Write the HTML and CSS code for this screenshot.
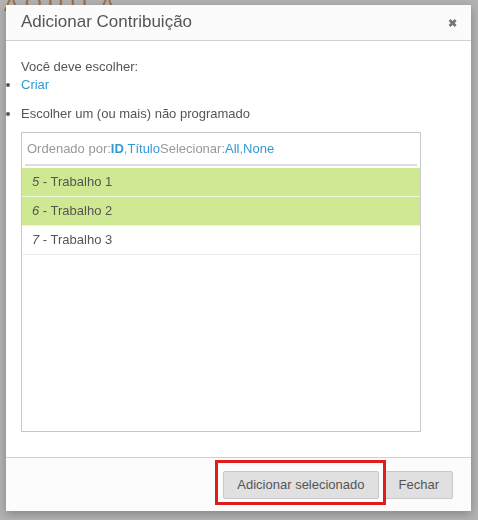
FILE: index.html
```html
<!DOCTYPE html>
<html>
<head>
<meta charset="utf-8">
<link rel="stylesheet" href="styles.css">
</head>
<body>
<div class="page">
  <div class="brand">AQUILA</div>
</div>
<div class="overlay"></div>
<div class="dialog">
  <div class="dlg-head">
    <h3 class="dlg-title">Adicionar Contribuição</h3>
    <span class="dlg-close">&#10006;</span>
  </div>
  <div class="dlg-body">
    <p class="intro">Você deve escolher:</p>
    <ul class="choices">
      <li><a class="link">Criar</a></li>
      <li class="second">Escolher um (ou mais) não programado</li>
    </ul>
    <div class="listbox">
      <div class="list-head">Ordenado por:<a class="link strong">ID</a>,<a class="link">Título</a>Selecionar:<a class="link">All</a>,<a class="link">None</a></div>
      <div class="row selected"><i>5</i> - Trabalho 1</div>
      <div class="row selected"><i>6</i> - Trabalho 2</div>
      <div class="row"><i>7</i> - Trabalho 3</div>
    </div>
  </div>
  <div class="dlg-foot">
    <button class="btn">Adicionar selecionado</button>
    <button class="btn">Fechar</button>
    <div class="highlight"></div>
  </div>
</div>
</body>
</html>
```
FILE: styles.css
```css
html, body {
  margin: 0;
  padding: 0;
  height: 100%;
}
body {
  background: #ffffff;
  font-family: "Liberation Sans", Arial, sans-serif;
  font-size: 13px;
  color: #555;
  overflow: hidden;
}
.page {
  padding: 0 0 0 4px;
}
.brand {
  font-size: 22px;
  letter-spacing: 6px;
  color: #e0a060;
  margin-top: -9px;
}
.overlay {
  position: fixed;
  inset: 0;
  background: rgba(0, 0, 0, 0.3);
}
.dialog {
  position: absolute;
  left: 6px;
  top: 5px;
  width: 465px;
  height: 506px;
  background: #fff;
  box-shadow: 0 3px 9px rgba(0, 0, 0, 0.25);
  display: flex;
  flex-direction: column;
}
.dlg-head {
  height: 35px;
  border-bottom: 1px solid #d0d0d0;
  background: #fbfbfb;
  display: flex;
  align-items: center;
  justify-content: space-between;
  padding: 0 14px 0 15px;
}
.dlg-title {
  margin: 0;
  font-weight: normal;
  font-size: 17px;
  color: #555;
  padding-bottom: 1px;
}
.dlg-close {
  font-size: 11px;
  color: #777;
  font-weight: bold;
  margin-top: 2px;
}
.dlg-body {
  flex: 1;
  padding: 17px 15px 0 15px;
}
.intro {
  margin: 0;
  line-height: 18px;
}
.choices {
  margin: 0;
  padding: 0;
  line-height: 18px;
}
.choices .second {
  margin-top: 11px;
}
.link {
  color: #3399d6;
  cursor: pointer;
}
.strong {
  font-weight: bold;
}
.listbox {
  margin-top: 9px;
  width: 398px;
  height: 298px;
  border: 1px solid #c8c8c8;
}
.list-head {
  margin: 0 3px 2px 3px;
  padding: 6px 2px 5px 2px;
  line-height: 20px;
  color: #999;
  border-bottom: 2px solid #dcdcdc;
}
.row {
  height: 28px;
  line-height: 28px;
  padding-left: 10px;
  border-bottom: 1px solid #ececec;
  color: #555;
}
.row.selected {
  background: #cfe992;
  border-bottom-color: #eef6dc;
}
.dlg-foot {
  position: relative;
  height: 53px;
  border-top: 1px solid #d0d0d0;
  background: #fcfcfc;
  display: flex;
  justify-content: flex-end;
  align-items: center;
  gap: 6px;
  padding-right: 18px;
}
.btn {
  font-family: "Liberation Sans", Arial, sans-serif;
  font-size: 13px;
  color: #555;
  background: #e0e0e0;
  border: 1px solid #c8c8c8;
  border-radius: 2px;
  height: 28px;
  padding: 0 13px;
}
.highlight {
  position: absolute;
  left: 209px;
  top: 2px;
  width: 165px;
  height: 39px;
  border: 3px solid #e21b1b;
  pointer-events: none;
}
```
